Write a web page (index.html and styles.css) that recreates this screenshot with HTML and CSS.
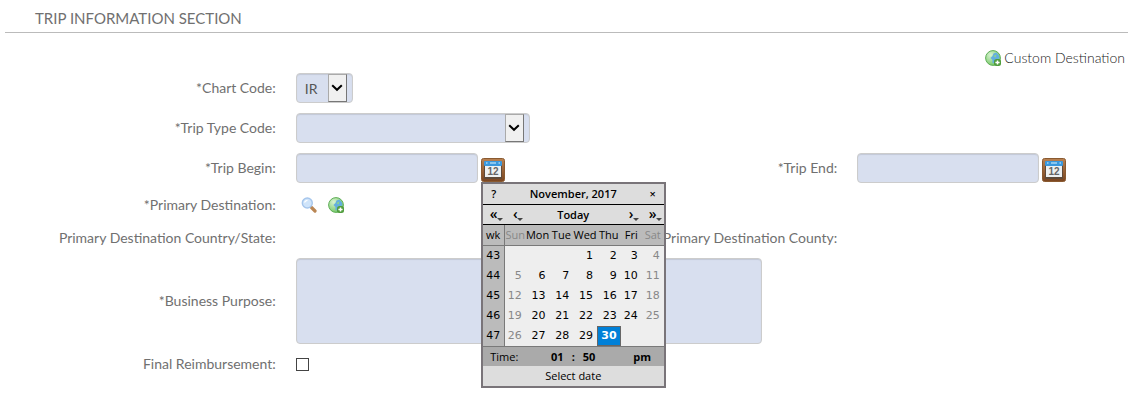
FILE: index.html
```html
<!DOCTYPE html>
<html lang="en">
<head>
    <meta charset="UTF-8">
    <meta name="viewport" content="width=device-width, initial-scale=1.0">
    <title>Trip Information</title>
    <link rel="stylesheet" href="styles.css">
</head>
<body>
    <!-- Shared icons -->
    <svg class="sprite" aria-hidden="true">
        <defs>
            <radialGradient id="globeFill" cx="35%" cy="30%" r="80%">
                <stop offset="0" stop-color="#d8f3d2"/>
                <stop offset="1" stop-color="#6cc45c"/>
            </radialGradient>
            <linearGradient id="woodFill" x1="0" y1="0" x2="0" y2="1">
                <stop offset="0" stop-color="#b98252"/>
                <stop offset="1" stop-color="#7a4520"/>
            </linearGradient>
            <symbol id="globe" viewBox="0 0 16 16">
                <circle cx="8" cy="8" r="7.4" fill="url(#globeFill)" stroke="#5fae57"/>
                <path d="M11.5 2.5 14 5.5 14.5 8.5 12 9 10 9.5 9.5 13.5 7.5 13 7.5 10 5.5 8 7.5 6 8.5 3.5z" fill="#62aee0"/>
                <path d="M8.5 6 11.5 4.5 10.5 7.5z" fill="#8ed784"/>
                <rect x="9" y="9" width="7" height="7" rx="2.5" fill="#4f9d3c"/>
                <path d="M12.5 10.4v4.2M10.4 12.5h4.2" stroke="#fff" stroke-width="1.5"/>
            </symbol>
            <symbol id="calendar" viewBox="0 0 24 24">
                <rect x=".5" y=".5" width="23" height="23" rx="2" fill="url(#woodFill)" stroke="#8a5a30"/>
                <rect x="3" y="4" width="18" height="17" rx="1" fill="#5e4a3a"/>
                <rect x="4" y="7" width="16" height="12" fill="#eef1f2"/>
                <rect x="3" y="3" width="18" height="5" rx="1" fill="#3a98dd"/>
                <path d="M5 5h1.5M9 5h6M17.5 5H19" stroke="#a5d5f5" stroke-width="1.5"/>
                <text x="12" y="17" text-anchor="middle" class="calendar-day">12</text>
            </symbol>
            <symbol id="search" viewBox="0 0 16 16">
                <path d="M10.5 10.5 14 14" stroke="#b98654" stroke-width="3.2" stroke-linecap="round"/>
                <circle cx="6.3" cy="6" r="5" fill="#cfe4fa" stroke="#a6c6ec" stroke-width="1.4"/>
                <path d="M3.5 5.5c.5-1.5 1.5-2.2 3-2.2" fill="none" stroke="#fff" stroke-width="1.3"/>
            </symbol>
            <symbol id="chevron" viewBox="0 0 12 8">
                <path d="M1.2 1.2 6 5.8 10.8 1.2" fill="none" stroke="#000" stroke-width="2"/>
            </symbol>
        </defs>
    </svg>

    <main class="page">
        <h2 class="section-title">TRIP INFORMATION SECTION</h2>

        <div class="actions">
            <a href="#" class="custom-link"><svg class="icon"><use href="#globe"/></svg>Custom Destination</a>
        </div>

        <form class="trip-form">
            <div class="row">
                <label for="chartCode">*Chart Code:</label>
                <div class="field">
                    <span class="select">
                        <select id="chartCode" class="select-short"><option>IR</option></select>
                        <span class="arrow"><svg><use href="#chevron"/></svg></span>
                    </span>
                </div>
            </div>

            <div class="row">
                <label for="tripType">*Trip Type Code:</label>
                <div class="field">
                    <span class="select">
                        <select id="tripType" class="select-long"><option></option></select>
                        <span class="arrow"><svg><use href="#chevron"/></svg></span>
                    </span>
                </div>
            </div>

            <div class="row">
                <label for="tripBegin">*Trip Begin:</label>
                <div class="field">
                    <input type="text" id="tripBegin">
                    <div class="picker">
                        <button type="button" class="icon-button" aria-label="Pick begin date"><svg class="calendar-icon"><use href="#calendar"/></svg></button>
                        <div class="popup">
                            <table class="calendar">
                                <colgroup>
                                    <col class="col-week"><col class="col-end"><col><col><col><col><col class="col-end"><col class="col-week">
                                </colgroup>
                                <thead>
                                    <tr class="bar">
                                        <td><button type="button">?</button></td>
                                        <th colspan="6">November, 2017</th>
                                        <td><button type="button" aria-label="Close">×</button></td>
                                    </tr>
                                    <tr class="bar nav">
                                        <td><button type="button" class="more">«</button></td>
                                        <td><button type="button" class="more">‹</button></td>
                                        <td colspan="4"><button type="button">Today</button></td>
                                        <td><button type="button" class="more">›</button></td>
                                        <td><button type="button" class="more">»</button></td>
                                    </tr>
                                    <tr class="days">
                                        <th>wk</th><th class="weekend">Sun</th><th>Mon</th><th>Tue</th><th>Wed</th><th>Thu</th><th>Fri</th><th class="weekend">Sat</th>
                                    </tr>
                                </thead>
                                <tbody>
                                    <tr><th>43</th><td></td><td></td><td></td><td>1</td><td>2</td><td>3</td><td class="weekend">4</td></tr>
                                    <tr><th>44</th><td class="weekend">5</td><td>6</td><td>7</td><td>8</td><td>9</td><td>10</td><td class="weekend">11</td></tr>
                                    <tr><th>45</th><td class="weekend">12</td><td>13</td><td>14</td><td>15</td><td>16</td><td>17</td><td class="weekend">18</td></tr>
                                    <tr><th>46</th><td class="weekend">19</td><td>20</td><td>21</td><td>22</td><td>23</td><td>24</td><td class="weekend">25</td></tr>
                                    <tr><th>47</th><td class="weekend">26</td><td>27</td><td>28</td><td>29</td><td class="selected">30</td><td></td><td></td></tr>
                                </tbody>
                                <tfoot>
                                    <tr class="time">
                                        <td colspan="2">Time:</td>
                                        <td colspan="4"><span class="clock"><b>01</b><b>:</b><b>50</b></span></td>
                                        <td colspan="2"><b>pm</b></td>
                                    </tr>
                                    <tr class="status"><td colspan="8">Select date</td></tr>
                                </tfoot>
                            </table>
                        </div>
                    </div>
                </div>
                <label for="tripEnd">*Trip End:</label>
                <div class="field">
                    <input type="text" id="tripEnd">
                    <button type="button" class="icon-button" aria-label="Pick end date"><svg class="calendar-icon"><use href="#calendar"/></svg></button>
                </div>
            </div>

            <div class="row row-text">
                <span class="label">*Primary Destination:</span>
                <div class="field lookup">
                    <button type="button" class="icon-button" aria-label="Search destination"><svg class="icon"><use href="#search"/></svg></button>
                    <button type="button" class="icon-button" aria-label="Custom destination"><svg class="icon"><use href="#globe"/></svg></button>
                </div>
            </div>

            <div class="row row-text">
                <span class="label">Primary Destination Country/State:</span>
                <div class="field"></div>
                <span class="label">Primary Destination County:</span>
                <div class="field"></div>
            </div>

            <div class="row">
                <label for="purpose">*Business Purpose:</label>
                <div class="field wide"><textarea id="purpose"></textarea></div>
            </div>

            <div class="row row-text">
                <label for="finalReimbursement">Final Reimbursement:</label>
                <div class="field"><input type="checkbox" id="finalReimbursement"></div>
            </div>
        </form>
    </main>
</body>
</html>
```
FILE: styles.css
```css
* {
    box-sizing: border-box;
}

body {
    margin: 0;
    background-color: #fff;
    font-family: Lato, sans-serif;
    font-size: 14px;
    color: #707070;
}

.sprite {
    position: absolute;
    width: 0;
    height: 0;
}

.page {
    padding: 4px 18px 20px 5px;
}

.section-title {
    margin: 0;
    padding: 0 30px;
    border-bottom: 1px solid #bbb;
    font-size: 15px;
    font-weight: 400;
    line-height: 28px;
}

.actions {
    display: flex;
    justify-content: flex-end;
    padding: 15px 3px 0;
    line-height: 20px;
}

.custom-link {
    display: flex;
    align-items: center;
    gap: 3px;
    font-weight: 300;
    color: #222;
    text-decoration: none;
}

.icon {
    display: block;
    width: 16px;
    height: 16px;
}

/* Label / field pairs, two pairs to a row */
.row {
    display: grid;
    grid-template-columns: repeat(4, minmax(0, 1fr));
    align-items: center;
    min-height: 40px;
}

.row-text {
    min-height: 33px;
}

label,
.label {
    padding: 0 10px;
    text-align: right;
    white-space: nowrap;
}

label {
    padding-bottom: 2px;
}

.field {
    display: flex;
    align-items: flex-end;
    gap: 3px;
    padding: 0 10px;
}

.wide {
    grid-column: span 2;
}

.lookup {
    gap: 11px;
    padding-left: 15px;
}

input[type="text"],
select,
textarea {
    border: 1px solid #ccc;
    border-radius: 4px;
    background-color: #d8dfef;
    box-shadow: inset 0 1px 1px rgba(0, 0, 0, 0.1);
    font-family: inherit;
    font-size: 14px;
    color: #555;
}

input[type="text"] {
    width: 182px;
    height: 30px;
    padding: 0 8px;
}

textarea {
    display: block;
    width: 466px;
    height: 86px;
    margin: 4px 0;
    padding: 8px;
    resize: none;
}

.select {
    position: relative;
}

select {
    display: block;
    height: 30px;
    padding: 0 8px;
    appearance: none;
}

.select-short {
    width: 57px;
}

.select-long {
    width: 234px;
}

.arrow {
    position: absolute;
    top: 1px;
    right: 6px;
    display: grid;
    place-items: center;
    width: 19px;
    height: 28px;
    border: 1px solid #777;
    border-top-color: #aaa;
    border-left-color: #aaa;
    background-color: #f0f0f0;
    pointer-events: none;
}

.arrow svg {
    width: 12px;
    height: 8px;
}

input[type="checkbox"] {
    width: 13px;
    height: 13px;
    margin: 0;
    border: 1px solid #444;
    background-color: #fff;
    appearance: none;
}

button {
    padding: 0;
    border: none;
    background: none;
    font: inherit;
    color: inherit;
    cursor: pointer;
}

.calendar-icon {
    display: block;
    width: 24px;
    height: 24px;
    margin-bottom: 1px;
}

.calendar-day {
    font-family: "Liberation Sans", sans-serif;
    font-size: 10px;
    font-weight: 700;
    fill: #666;
}

/* Date popup */
.picker {
    position: relative;
    display: flex;
}

.popup {
    position: absolute;
    top: 24px;
    left: 0;
    z-index: 1;
    width: 185px;
    border: 2px solid #797479;
    background-color: #eee;
}

.calendar {
    width: 100%;
    table-layout: fixed;
    border-spacing: 0;
    font-family: "DejaVu Sans", sans-serif;
    font-size: 11px;
    line-height: 18px;
    color: #000;
}

.calendar td,
.calendar th {
    height: 20px;
    padding: 0;
    font-weight: 400;
    text-align: center;
    white-space: nowrap;
}

.col-week {
    width: 22px;
}

.col-end {
    width: 21px;
}

.calendar .bar td,
.calendar .bar th {
    height: 21px;
    border-bottom: 1px solid #000;
    background-color: #ddd;
    font-family: "Open Sans", sans-serif;
    font-weight: 600;
}

.calendar .nav td {
    height: 20px;
}

.more {
    position: relative;
    font-size: 14px;
    line-height: 14px;
}

.more::after {
    content: "";
    position: absolute;
    right: -5px;
    bottom: 0;
    border: 3px solid transparent;
    border-top-color: #444;
    border-bottom: none;
}

.calendar .days th {
    height: 21px;
    border-bottom: 1px solid #797979;
    background-color: #bbb;
    font-family: "Open Sans", sans-serif;
}

.calendar tbody td {
    padding-right: 4px;
    text-align: right;
}

.calendar tbody th,
.calendar .days th:first-child {
    border-right: 1px solid #797979;
    background-color: #bbb;
}

.calendar .weekend {
    color: #888;
}

.calendar tbody .selected {
    padding-right: 3px;
    border: 1px solid #666;
    background-color: #0080d8;
    font-weight: 700;
    color: #fff;
}

.calendar .time td {
    border-top: 1px solid #797979;
    background-color: #aaa;
    font-family: "Open Sans", sans-serif;
}

.clock {
    display: flex;
    justify-content: center;
    gap: 8px;
}

.calendar .status td {
    background-color: #ddd;
    font-family: "Open Sans", sans-serif;
}
```
